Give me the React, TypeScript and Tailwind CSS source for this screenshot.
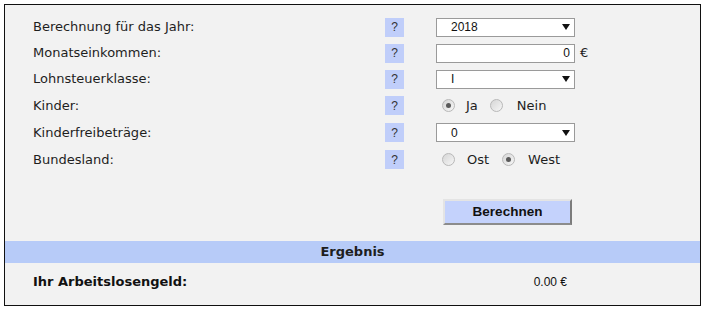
import { useState } from 'react';

const labelFont = "font-['DejaVu_Sans',Verdana,sans-serif]";
const ctrlFont = "font-['Liberation_Sans',Arial,sans-serif]";

function Help() {
    return (
        <div className={`flex h-[19px] w-[19px] items-center justify-center bg-[#c0cefa] text-[12px] text-[#333] ${ctrlFont}`}>
            ?
        </div>
    );
}

function FakeSelect({ value }: { value: string }) {
    return (
        <div className={`flex h-[19px] w-[139px] items-center justify-between border border-[#9a9a9a] bg-white pl-[14px] pr-[3px] text-[12px] text-[#111] ${ctrlFont}`}>
            <span>{value}</span>
            <svg width="8" height="6" viewBox="0 0 8 6" className="mr-[1px]">
                <polygon points="0,0 8,0 4,6" fill="#111" />
            </svg>
        </div>
    );
}

function Radio({ checked, onClick }: { checked: boolean; onClick: () => void }) {
    return (
        <span
            onClick={onClick}
            className="flex h-[13px] w-[13px] cursor-pointer items-center justify-center rounded-full border border-[#b8b8b8] bg-gradient-to-br from-[#d6d6d6] to-[#f6f6f6]"
        >
            {checked && <span className="h-[5px] w-[5px] rounded-full bg-[#5a5a5a]" />}
        </span>
    );
}

function Row({ label, tall, children }: { label: string; tall?: boolean; children: React.ReactNode }) {
    return (
        <div className={`flex items-center ${tall ? 'h-[27px]' : 'h-[26px]'}`}>
            <div className={`w-[380px] pl-[28px] text-[13px] text-[#1e1e1e] ${labelFont}`}>{label}</div>
            <Help />
            <div className="ml-[32px] flex items-center">{children}</div>
        </div>
    );
}

function App() {
    const [kinder, setKinder] = useState(true);
    const [west, setWest] = useState(true);

    return (
        <div className="min-h-screen bg-white p-[4px]">
            <div className="w-[697px] border border-[#111] bg-[#f2f2f2]">
                <div className="pt-[9px]">
                    <Row label="Berechnung für das Jahr:">
                        <FakeSelect value="2018" />
                    </Row>
                    <Row label="Monatseinkommen:">
                        <div className={`flex h-[19px] w-[139px] items-center justify-end border border-[#9a9a9a] bg-white pr-[4px] text-[12px] text-[#111] ${ctrlFont}`}>
                            0
                        </div>
                        <span className={`ml-[5px] text-[13px] text-[#1e1e1e] ${labelFont}`}>€</span>
                    </Row>
                    <Row label="Lohnsteuerklasse:">
                        <FakeSelect value="I" />
                    </Row>
                    <Row label="Kinder:" tall>
                        <div className={`ml-[6px] flex items-center text-[13px] text-[#1e1e1e] ${labelFont}`}>
                            <Radio checked={kinder} onClick={() => setKinder(true)} />
                            <span className="ml-[11px]">Ja</span>
                            <span className="ml-[12px]"><Radio checked={!kinder} onClick={() => setKinder(false)} /></span>
                            <span className="ml-[14px]">Nein</span>
                        </div>
                    </Row>
                    <Row label="Kinderfreibeträge:" tall>
                        <FakeSelect value="0" />
                    </Row>
                    <Row label="Bundesland:" tall>
                        <div className={`ml-[6px] flex items-center text-[13px] text-[#1e1e1e] ${labelFont}`}>
                            <Radio checked={!west} onClick={() => setWest(false)} />
                            <span className="ml-[12px]">Ost</span>
                            <span className="ml-[13px]"><Radio checked={west} onClick={() => setWest(true)} /></span>
                            <span className="ml-[13px]">West</span>
                        </div>
                    </Row>
                </div>

                <div className="mt-[26px] flex pl-[438px]">
                    <button className={`h-[26px] w-[129px] border-2 border-t-[#e4e4e4] border-l-[#e4e4e4] border-r-[#7c7c7c] border-b-[#8c8c8c] bg-[#c4d2fc] text-[13.5px] font-bold text-[#111] ${ctrlFont}`}>
                        Berechnen
                    </button>
                </div>

                <div className={`mt-[16px] flex h-[22px] items-center justify-center bg-[#b7cbf8] text-[13px] font-bold text-[#1e1e1e] ${labelFont}`}>
                    Ergebnis
                </div>

                <div className="flex h-[42px] items-center pb-[5px]">
                    <div className={`w-[431px] pl-[28px] text-[13px] font-bold text-[#111] ${labelFont}`}>Ihr Arbeitslosengeld:</div>
                    <div className={`w-[131px] text-right text-[12px] text-[#111] ${ctrlFont}`}>0.00 €</div>
                </div>
            </div>
        </div>
    );
}

export default App;
